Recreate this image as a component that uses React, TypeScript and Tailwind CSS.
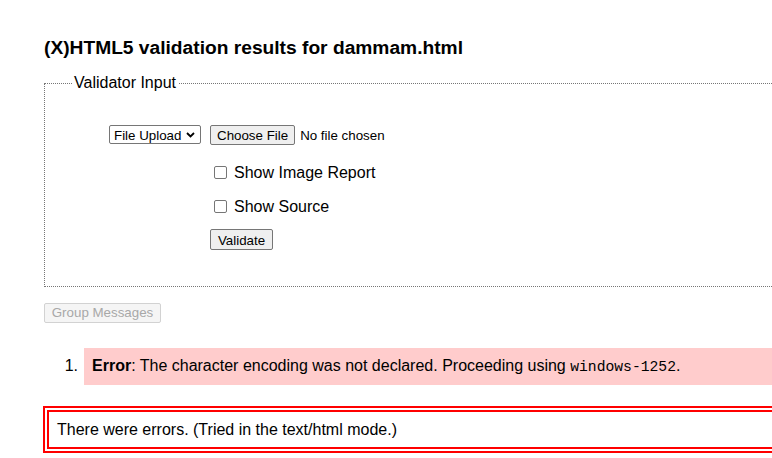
import React from "react"

function Chevron() {
  return (
    <svg width="9" height="6" viewBox="0 0 9 6" className="ml-[5px]">
      <path d="M1 1 L4.5 4.5 L8 1" fill="none" stroke="#000" strokeWidth="1.8" />
    </svg>
  )
}

function Checkbox({ label }: { label: string }) {
  return (
    <label className="flex items-center h-[19px]">
      <span className="ml-[4px] mr-[7px] w-[13px] h-[13px] border border-[#767676] rounded-[2px] bg-white" />
      <span className="text-[16px] leading-[19px]">{label}</span>
    </label>
  )
}

export default function App() {
  return (
    <div className="w-[772px] h-[458px] overflow-hidden bg-white text-black font-['Liberation_Sans',Arial,sans-serif]">
      <div className="w-[900px] pl-[44px] pt-[37px]">
        <h2 className="text-[19.2px] font-bold leading-[22px]">(X)HTML5 validation results for dammam.html</h2>

        {/* Validator input */}
        <fieldset className="mt-[16px] border border-dotted border-[#767676] h-[212px]">
          <legend className="ml-[27px] px-[2px] text-[16px] leading-[16px]">Validator Input</legend>
          <div className="pl-[64px] pt-[34px]">
            <div className="flex items-start h-[20px] text-[13.33px]">
              <div className="flex items-center h-[19px] w-[92px] pl-[4px] pt-[1px] border border-[#767676] rounded-[2px] leading-[17px]">
                File Upload
                <Chevron />
              </div>
              <button className="ml-[9px] h-[20px] px-[6px] bg-[#efefef] border border-[#767676] rounded-[2px] leading-[18px] pt-[1px]">
                Choose File
              </button>
              <span className="ml-[5px] pt-[2px] leading-[18px]">No file chosen</span>
            </div>
            <div className="ml-[101px] mt-[18px] flex flex-col gap-[15px]">
              <Checkbox label="Show Image Report" />
              <Checkbox label="Show Source" />
            </div>
            <button className="ml-[101px] mt-[13px] h-[21px] w-[63px] bg-[#efefef] border border-[#767676] rounded-[2px] text-[13.33px] leading-[17px] pt-[1px]">
              Validate
            </button>
          </div>
        </fieldset>

        <button
          disabled
          className="mt-[16px] h-[20px] w-[117px] bg-[#f5f5f5] border border-[#d2d2d2] rounded-[2px] text-[13.33px] leading-[16px] text-[#a8a8a8]"
        >
          Group Messages
        </button>

        {/* Messages */}
        <ol className="mt-[24px] flex flex-col">
          <li className="flex items-stretch">
            <span className="w-[40px] text-right pr-[6px] text-[16px] leading-[35px]">1.</span>
            <p className="flex-1 bg-[#ffcccc] px-[8px] py-[8px] text-[16px] leading-[19px]">
              <strong className="font-bold">Error</strong>: The character encoding was not declared. Proceeding using{" "}
              <code className="font-['Liberation_Mono',monospace] text-[14.7px]">windows-1252</code>.
            </p>
          </li>
        </ol>

        <div className="-ml-[1px] mt-[21px] border-[6px] border-double border-[#ff0000] px-[8px] py-[8px] text-[16px] leading-[19px]">
          There were errors. (Tried in the text/html mode.)
        </div>
      </div>
    </div>
  )
}
